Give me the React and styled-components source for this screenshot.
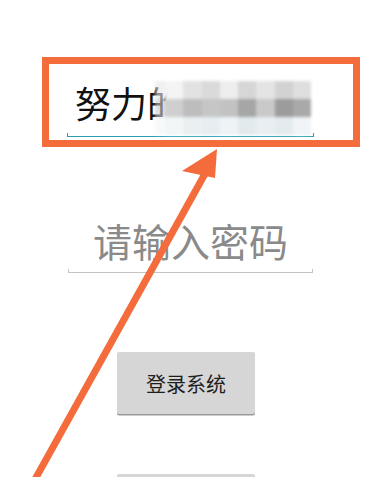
import React from 'react'
import styled, { createGlobalStyle } from 'styled-components';

const Global = createGlobalStyle`
    body {
        margin: 0;
        background: #ffffff;
        font-family: "Noto Sans CJK SC", "Noto Sans", sans-serif;
    }
`;

const Page = styled.div`
    width : 387px;
    height : 477px;
    position : relative;
    overflow : hidden;
    display : flex;
    flex-direction: column;
    background : #ffffff;
    & > * { flex-shrink : 0; }
`;

const Highlight = styled.div`
    margin : 57px 0 0 42px;
    width : 318px;
    height : 90px;
    box-sizing : border-box;
    border : 7px solid #f46b3c;
    padding : 0 0 0 18px;
    display : flex;
    align-items : flex-end;
`;

const Field = styled.div`
    width : ${p => p.width}px;
    position : relative;
    display : flex;
    flex-direction: column;
    margin-left : ${p => p.left || 0}px;
`;

const Value = styled.div`
    font-size : ${p => p.size}px;
    line-height : 1;
    color : ${p => p.color};
    padding-left : ${p => p.indent}px;
    white-space : nowrap;
    height : ${p => p.height}px;
`;

const Underline = styled.div`
    height : 3px;
    border : 1.5px solid ${p => p.color};
    border-top : none;
    margin-bottom : ${p => p.bottom || 0}px;
`;

const Mosaic = styled.div`
    position : absolute;
    left : 88px;
    top : -3px;
    width : 156px;
    display : grid;
    grid-template-columns: 10px repeat(8, 1fr);
    grid-auto-rows: 18px;
    filter : blur(1.5px);
`;

const Cell = styled.div`
    background : ${p => p.c};
`;

const PasswordRow = styled.div`
    margin-top : 74px;
`;

const Button = styled.div`
    width : 138px;
    height : 62px;
    margin-left : 117px;
    margin-top : ${p => p.top}px;
    background : #d6d6d6;
    border-radius : 2px;
    box-shadow : 0 1.5px 0 #9a9a9a;
    display : flex;
    align-items : center;
    justify-content : center;
    font-size : 20px;
    color : #1e1e1e;
`;

const Arrow = styled.svg`
    position : absolute;
    left : 0;
    top : 0;
    pointer-events : none;
`;

const mosaic = [
    'rgba(230,230,230,0.6)', '#f4f4f4', '#e2e2e2', '#dadada', '#eeeeee', '#d6d6d6', '#e4e4e4', '#d2d2d2', '#dedede',
    'rgba(200,200,200,0.6)', '#cfcfcf', '#bdbdbd', '#c6c6c6', '#c2c2c2', '#a6a6a6', '#c9c9c9', '#9c9c9c', '#a9a9a9',
    'rgba(240,245,246,0.6)', '#f2f6f7', '#eaf0f2', '#e6eef1', '#eef3f5', '#e2eaee', '#e8eef1', '#e4ebee', '#f0f4f6',
];

export default function App(){
    return <Page>
                <Global />
                <Highlight>
                    <Field width={247}>
                        <Value size={36} height={49} color="#111" indent={8}>努力的</Value>
                        <Mosaic>
                            {mosaic.map((c, i) => <Cell key={i} c={c} />)}
                        </Mosaic>
                        <Underline color="#2a9db3" bottom={3} />
                    </Field>
                </Highlight>
                <PasswordRow>
                    <Field width={245} left={68}>
                        <Value size={39} height={48} color="#8a8a8a" indent={25}>请输入密码</Value>
                        <Underline color="#c4c4c4" />
                    </Field>
                </PasswordRow>
                <Button top={79}>登录系统</Button>
                <Button top={60} />
                <Arrow width="387" height="477" viewBox="0 0 387 477">
                    <line x1="28" y1="492" x2="211" y2="163" stroke="#f46b3c" strokeWidth="7" />
                    <polygon points="217,149 182,171 215,178" fill="#f46b3c" />
                </Arrow>
            </Page>
}
